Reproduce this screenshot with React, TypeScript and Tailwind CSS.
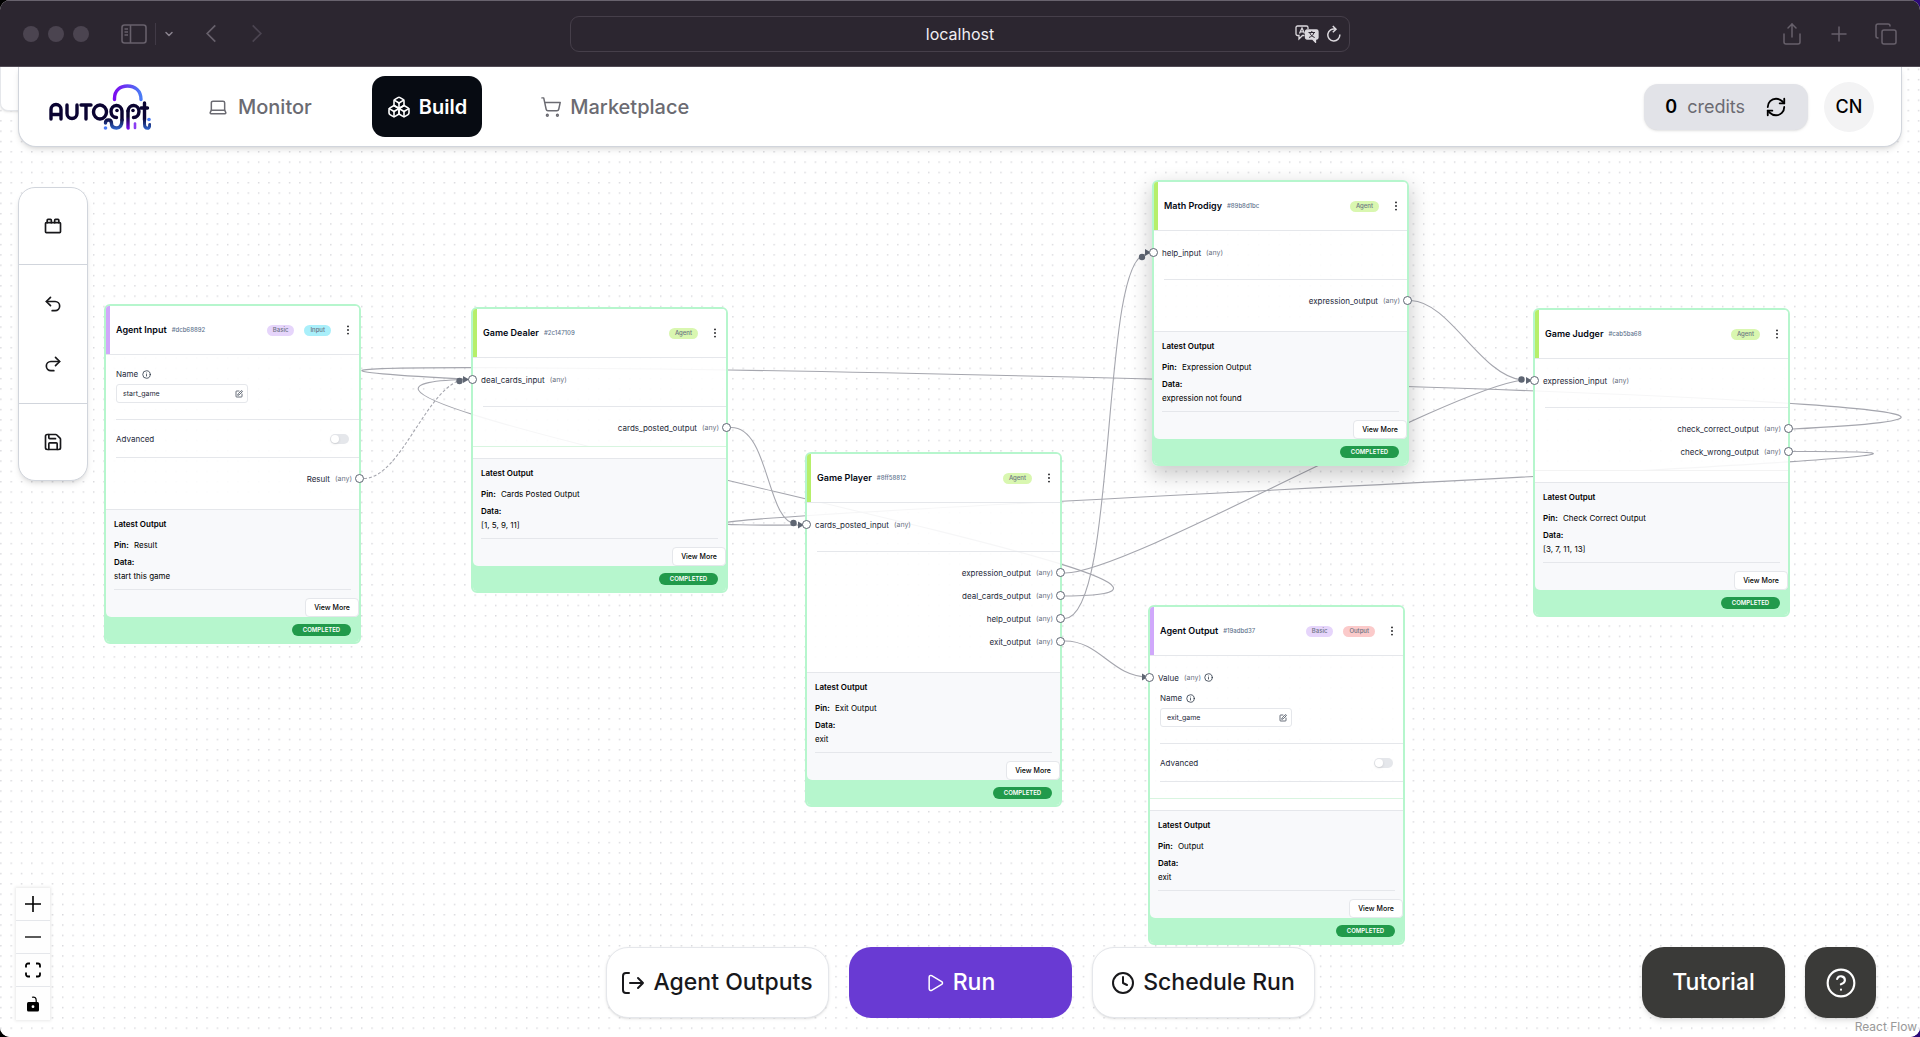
import React from 'react';
import {
  Boxes,
  ChevronDown,
  CircleHelp,
  Clock,
  Copy,
  Info,
  Laptop,
  Play,
  Plus,
  Redo2,
  RefreshCw,
  Save,
  Share,
  ShoppingCart,
  SquarePen,
  ToyBrick,
  Undo2,
} from 'lucide-react';

type Tag = 'Agent' | 'Basic' | 'Input' | 'Output';

interface FlowNode {
  id: string;
  title: string;
  tags: Tag[];
  position: string;
  accent: string;
  inputs: string[];
  outputs: string[];
  valueInput?: boolean;
  name?: string;
  pin: string;
  data: string;
  seam?: string;
  selected?: boolean;
}

const tagColors: Record<Tag, string> = {
  Agent: 'bg-[#d9f7b0]',
  Basic: 'bg-[#e6d5fb]',
  Input: 'bg-[#a9effa]',
  Output: 'bg-[#fbcaca]',
};

const nodes: FlowNode[] = [
  {
    id: 'dcb68892',
    title: 'Agent Input',
    tags: ['Basic', 'Input'],
    position: 'left-[104px] top-[237px]',
    accent: 'bg-[#d0a8fb]',
    inputs: [],
    outputs: ['Result'],
    name: 'start_game',
    pin: 'Result',
    data: 'start this game',
  },
  {
    id: '2c147109',
    title: 'Game Dealer',
    tags: ['Agent'],
    position: 'left-[471px] top-[240px]',
    accent: 'bg-[#b6ef6a]',
    inputs: ['deal_cards_input'],
    outputs: ['cards_posted_output'],
    pin: 'Cards Posted Output',
    data: '[1, 5, 9, 11]',
    seam: 'border-[#d8f5e0]',
  },
  {
    id: '8ff58812',
    title: 'Game Player',
    tags: ['Agent'],
    position: 'left-[805px] top-[385px]',
    accent: 'bg-[#b6ef6a]',
    inputs: ['cards_posted_input'],
    outputs: ['expression_output', 'deal_cards_output', 'help_output', 'exit_output'],
    pin: 'Exit Output',
    data: 'exit',
  },
  {
    id: '89b8d1bc',
    title: 'Math Prodigy',
    tags: ['Agent'],
    position: 'left-[1152px] top-[113px]',
    accent: 'bg-[#b6ef6a]',
    inputs: ['help_input'],
    outputs: ['expression_output'],
    pin: 'Expression Output',
    data: 'expression not found',
    selected: true,
  },
  {
    id: 'cab5ba68',
    title: 'Game Judger',
    tags: ['Agent'],
    position: 'left-[1533px] top-[241px]',
    accent: 'bg-[#b6ef6a]',
    inputs: ['expression_input'],
    outputs: ['check_correct_output', 'check_wrong_output'],
    pin: 'Check Correct Output',
    data: '[3, 7, 11, 13]',
    seam: 'border-[#f3f3f3]',
  },
  {
    id: '19adbd37',
    title: 'Agent Output',
    tags: ['Basic', 'Output'],
    position: 'left-[1148px] top-[538px]',
    accent: 'bg-[#d0a8fb]',
    inputs: [],
    outputs: [],
    valueInput: true,
    name: 'exit_game',
    pin: 'Output',
    data: 'exit',
    seam: 'border-[#d8f5e0]',
  },
];

// Edge paths in window coordinates, the group is shifted by the title bar height
const edges = [
  'M1792 429 C2462 396 -199 344 471 379.5',
  'M1792 451.5 C2292 449 305 529 805 525',
  'M1065 596 C1366 595 156 383 471 379.5',
  'M731 427.5 C770 427 766 524 797 524',
  'M1065 618.5 C1118 615 1100 258 1146 254',
  'M1065 573 C1130 572 1440 392 1522 380',
  'M1065 641 C1100 641 1112 677 1148 677',
  'M1411 300.5 C1450 302 1480 375 1522 380',
];
const beads = [[459.5, 381], [793.5, 523], [1142, 257], [1521.5, 379.5]];
const arrows = [[468, 379.5], [803, 525], [1150, 252.5], [1531, 380.5], [1147, 677]];

const Edges: React.FC = () => (
  <svg className="absolute inset-0 h-full w-full" aria-hidden="true">
    <defs>
      <pattern id="dots" x="5.8" y="79.4" width="10.31" height="10.31" patternUnits="userSpaceOnUse">
        <circle cx="5.5" cy="5.5" r="0.55" fill="#a3a3ab" />
      </pattern>
    </defs>
    <rect width="100%" height="100%" fill="url(#dots)" />
    <g transform="translate(0 -67)" fill="none" stroke="#a5a6ae" strokeWidth="1.1">
      {edges.map((d) => (
        <path key={d} d={d} />
      ))}
      <path d="M364 478.5 C402 478 428 382 466 379" strokeDasharray="3 2" />
      {beads.map(([x, y]) => (
        <circle key={x} cx={x} cy={y} r="3.2" fill="#5f6673" stroke="none" />
      ))}
      {arrows.map(([x, y]) => (
        <path key={x} d={`M${x - 5} ${y - 3.5} L${x + 1} ${y} L${x - 5} ${y + 3.5} Z`} fill="#5f6673" stroke="none" />
      ))}
    </g>
  </svg>
);

const Handle: React.FC<{ side: 'left' | 'right' }> = ({ side }) => (
  <span
    className={`absolute top-[7px] z-10 h-[9px] w-[9px] rounded-full border border-[#5f6673] bg-white ${
      side === 'left' ? '-left-[5px]' : '-right-[5px]'
    }`}
  />
);

const PinLabel: React.FC<{ text: string; children?: React.ReactNode }> = ({ text, children }) => (
  <>
    <span>{text}</span>
    <span className="text-[7px] text-gray-500">(any)</span>
    {children}
  </>
);

const NameField: React.FC<{ id: string; value: string }> = ({ id, value }) => (
  <div className="mr-[111px] ml-[10px]">
    <div className="flex h-[14px] items-center gap-1">
      <label htmlFor={`name-${id}`}>Name</label>
      <Info className="h-[9px] w-[9px]" />
    </div>
    <div className="mt-[3px] flex h-[19px] items-center rounded-[3px] border border-gray-200 bg-white pr-1 pl-[6px]">
      <input id={`name-${id}`} defaultValue={value} className="w-full min-w-0 text-[7px] leading-[10px] outline-none" />
      <SquarePen className="h-2 w-2 shrink-0" />
    </div>
  </div>
);

const NodeCard: React.FC<{ node: FlowNode }> = ({ node }) => (
  <article
    className={`absolute w-[257px] rounded-[6px] border-2 border-[#b6f6cd] text-[8px] leading-[10px] text-gray-800 ${node.position} ${
      node.selected ? 'shadow-[0_8px_20px_2px_rgba(0,0,0,0.2)]' : ''
    }`}
  >
    <header className="flex h-[49px] items-stretch rounded-t-[4px] border-b border-gray-200 bg-white">
      <div className={`w-1 rounded-tl-[3px] ${node.accent}`} />
      <div className="flex flex-1 items-center pr-[6px] pl-[6px]">
        <h2 className="text-[9px] font-semibold text-gray-950">{node.title}</h2>
        <span className="ml-[5px] text-[6px] font-medium text-slate-500">#{node.id}</span>
        <div className="ml-auto flex items-center gap-[10px]">
          {node.tags.map((tag) => (
            <span
              key={tag}
              className={`flex h-[11px] items-center rounded-full px-[6px] text-[6px] font-medium text-gray-500 ${tagColors[tag]}`}
            >
              {tag}
            </span>
          ))}
        </div>
        <button aria-label="Node menu" className="ml-3 flex w-[10px] justify-center">
          <svg viewBox="0 0 4 10" className="h-[10px] w-1" fill="#18181b">
            <circle cx="2" cy="1.4" r="0.9" />
            <circle cx="2" cy="5" r="0.9" />
            <circle cx="2" cy="8.6" r="0.9" />
          </svg>
        </button>
      </div>
    </header>

    <div className="bg-white/90">
      {node.inputs.map((input) => (
        <div key={input} className="pt-[10px] pb-[15px]">
          <div className="relative flex h-[23px] items-center gap-[5px] pl-2">
            <Handle side="left" />
            <PinLabel text={input} />
          </div>
        </div>
      ))}
      {node.valueInput && (
        <div className="pt-[10px]">
          <div className="relative flex h-[23px] items-center gap-[5px] pl-2">
            <Handle side="left" />
            <PinLabel text="Value">
              <Info className="-ml-0.5 h-[9px] w-[9px]" />
            </PinLabel>
          </div>
        </div>
      )}
      {node.name && (
        <>
          <div className={node.valueInput ? 'pt-0.5 pb-4' : 'pt-3 pb-4'}>
            <NameField id={node.id} value={node.name} />
          </div>
          <label className="ml-[10px] flex h-[38px] items-center justify-between border-t border-gray-200 pr-[10px]">
            Advanced
            <input type="checkbox" role="switch" className="peer sr-only" />
            <span className="flex h-[10px] w-[19px] items-center rounded-full bg-gray-200 px-px">
              <span className="h-2 w-2 rounded-full bg-white shadow-sm" />
            </span>
          </label>
        </>
      )}
      <div className="ml-[10px] border-t border-gray-200" />
      <div className="pt-[9px] pb-[7px]">
        {node.outputs.map((output) => (
          <div key={output} className="relative flex h-[23px] items-center justify-end gap-[5px] pr-[7px]">
            <PinLabel text={output} />
            <Handle side="right" />
          </div>
        ))}
      </div>
      <div className={`h-3 border-t bg-white ${node.seam ?? 'border-transparent'}`} />
    </div>

    <footer className="rounded-b-[4px] bg-[#b6f6cd]">
      <div className="rounded-b-[5px] border-t border-gray-200 bg-[#f8f9fb] text-black">
        <div className="px-2 pt-[9px]">
          <h3 className="font-semibold">Latest Output</h3>
          <p className="mt-[11px]">
            <strong className="mr-[3px] font-semibold">Pin:</strong> {node.pin}
          </p>
          <p className="mt-[7px] font-semibold">Data:</p>
          <p className="mt-1">{node.data}</p>
          <hr className="mt-2 border-gray-200" />
        </div>
        <div className="mt-2 flex justify-end">
          <button className="h-[19px] w-[54px] rounded-[4px] border border-gray-200 bg-white text-[7px] font-medium">
            View More
          </button>
        </div>
      </div>
      <div className="flex h-[25px] items-center justify-end pr-2">
        <span className="flex h-3 w-[59px] items-center justify-center rounded-full bg-[#219a4b] text-[6px] font-semibold text-white">
          COMPLETED
        </span>
      </div>
    </footer>
  </article>
);

const BrowserBar: React.FC = () => (
  <div className="grid h-[67px] shrink-0 grid-cols-[1fr_780px_1fr] items-center border-t border-b border-t-[#69636e] border-b-[#514b55] bg-[#2c2630] text-[#67606b]">
    <div className="flex items-center pl-[23px]">
      <span className="h-4 w-4 rounded-full bg-[#4b4450]" />
      <span className="ml-[9px] h-4 w-4 rounded-full bg-[#4b4450]" />
      <span className="ml-[9px] h-4 w-4 rounded-full bg-[#4b4450]" />
      <button aria-label="Sidebar" className="ml-8">
        <svg viewBox="0 0 26 20" className="h-5 w-[26px]" fill="none" stroke="currentColor" strokeWidth="1.6">
          <rect x="1" y="1" width="24" height="18" rx="2.5" />
          <path d="M9.5 1v18M3.5 5h3.5M3.5 8h3.5M3.5 11h3.5" />
        </svg>
      </button>
      <span className="ml-2 h-[22px] w-px bg-[#413a46]" />
      <button aria-label="Tab groups" className="ml-[7px]">
        <ChevronDown className="h-3 w-3 text-[#8a838e]" strokeWidth={3} />
      </button>
      <button aria-label="Back" className="ml-[30px]">
        <svg viewBox="0 0 12 20" className="h-[19px] w-3" fill="none" stroke="currentColor" strokeWidth="1.8">
          <path d="M10.5 1.5L2 10l8.5 8.5" />
        </svg>
      </button>
      <button aria-label="Forward" className="ml-[34px] text-[#4b4450]">
        <svg viewBox="0 0 12 20" className="h-[19px] w-3" fill="none" stroke="currentColor" strokeWidth="1.8">
          <path d="M1.5 1.5L10 10l-8.5 8.5" />
        </svg>
      </button>
    </div>
    <div className="grid h-9 grid-cols-[1fr_auto_1fr] items-center rounded-[9px] border border-[#463f4a] px-2">
      <span />
      <span className="text-base text-[#f1eff3]">localhost</span>
      <div className="flex items-center justify-end gap-2 text-[#dcd9de]">
        <button aria-label="Translate">
          <svg viewBox="0 0 24 18" className="h-[18px] w-6" fill="none" stroke="currentColor" strokeWidth="1.3">
            <path d="M9.5 10.5H7.5L4 14v-3.5H2.5A1.5 1.5 0 0 1 1 9V2.5A1.5 1.5 0 0 1 2.5 1h9A1.5 1.5 0 0 1 13 2.5V4" />
            <path d="M4.5 8.5L7 3l2.5 5.5M5.3 6.8h3.4" />
            <path d="M12 5h9.5A1.5 1.5 0 0 1 23 6.5v6a1.5 1.5 0 0 1-1.5 1.5H20.5v3.2L17.5 14H12a1.5 1.5 0 0 1-1.5-1.5v-6A1.5 1.5 0 0 1 12 5z" fill="currentColor" />
            <path d="M13.5 7.5h6.5M16.8 6v1.5M19 7.5c-.6 2.4-2.5 4-5 5M14.7 7.5c.6 2.4 2.5 4 5 5" stroke="#2c2630" strokeWidth="1" />
          </svg>
        </button>
        <button aria-label="Reload">
          <svg viewBox="0 0 14 17" className="h-[17px] w-[14px]" fill="none" stroke="currentColor" strokeWidth="1.5">
            <path d="M12.8 9.5A6 6 0 1 1 8.5 4.2M5.8 1l3.2 3.2-3.2 3" />
          </svg>
        </button>
      </div>
    </div>
    <div className="flex items-center justify-end gap-[23px] pr-[22px]">
      <button aria-label="Share">
        <Share className="h-6 w-6" strokeWidth={1.5} />
      </button>
      <button aria-label="New tab">
        <Plus className="h-6 w-6" strokeWidth={1.5} />
      </button>
      <button aria-label="Tab overview">
        <Copy className="h-6 w-6" strokeWidth={1.5} />
      </button>
    </div>
  </div>
);

const Logo: React.FC = () => (
  <svg viewBox="0 0 102 46" className="h-[46px] w-[102px]" fill="none" strokeWidth="3.4" strokeLinecap="round" strokeLinejoin="round">
    <defs>
      <linearGradient id="arc" x1="0" x2="1">
        <stop offset="0" stopColor="#7c0cf0" />
        <stop offset="1" stopColor="#4a7bf5" />
      </linearGradient>
      <linearGradient id="stem" x1="0" y1="20" x2="0" y2="45" gradientUnits="userSpaceOnUse">
        <stop offset="0.5" stopColor="#0b0432" />
        <stop offset="1" stopColor="#7c0cf0" />
      </linearGradient>
      <linearGradient id="tail" x1="0" y1="34" x2="0" y2="45" gradientUnits="userSpaceOnUse">
        <stop offset="0" stopColor="#0b0432" />
        <stop offset="1" stopColor="#2f62c8" />
      </linearGradient>
    </defs>
    <path d="M65.5 15.5V14.5C65.5 6.5 71 2 78.5 2S92 6.5 92 15.5" stroke="url(#arc)" />
    <g stroke="#0b0432">
      <path d="M2 35V25.5a5 5 0 0 1 10 0V35M2 30.5h10" />
      <path d="M18 21v8.5a5 5 0 0 0 10 0v-8.5" />
      <path d="M32 21h10M37 21v14" />
      <ellipse cx="51" cy="28" rx="6.5" ry="7" />
      <path d="M73 36V27a5.5 6 0 1 0-5.5 6.5" />
      <path d="M79 27a5.5 6 0 1 1 5.5 6.5" />
      <path d="M95.5 19v17M92 24h6.5" />
    </g>
    <circle cx="68" cy="26.5" r="1.8" fill="#0b0432" />
    <circle cx="84" cy="26.5" r="1.8" fill="#0b0432" />
    <path d="M73 36c0 5-1.5 8-5.5 8s-5-2-5-4.5-1.2-3.5-3-3.5-3 1-3 3" stroke="url(#tail)" />
    <path d="M79 27v16.500l.1.5" stroke="url(#stem)" />
    <path d="M86 39.5v4.5" stroke="#8a3cf2" strokeWidth="2.6" />
    <path d="M95.5 36v4c0 3 1.2 4.3 3 4.3s2.2-1.3 2.2-3.8" stroke="url(#tail)" strokeWidth="3" />
    <circle cx="100" cy="35.5" r="1.8" fill="#4a7bf5" />
    <circle cx="56.500" cy="44" r="1.8" fill="#4a7bf5" />
  </svg>
);

const NavBar: React.FC = () => (
  <nav className="relative mx-[18px] flex h-[80px] items-center rounded-b-[18px] border border-t-0 border-gray-300 bg-white pr-[27px] pl-[30px] text-xl font-medium text-[#6b6b72] shadow-md">
    <a href="#home" aria-label="AutoGPT">
      <Logo />
    </a>
    <a href="#monitor" className="ml-[57px] flex items-center gap-2.5">
      <Laptop className="h-5 w-5" strokeWidth={1.8} />
      Monitor
    </a>
    <a
      href="#build"
      className="ml-[60px] flex h-[61px] items-center gap-2 rounded-[13px] bg-[#070b12] px-[15px] font-semibold text-white"
    >
      <Boxes className="h-6 w-6" strokeWidth={1.6} />
      Build
    </a>
    <a href="#marketplace" className="ml-[58px] flex items-center gap-2">
      <ShoppingCart className="h-[22px] w-[22px]" strokeWidth={1.6} />
      Marketplace
    </a>
    <div className="ml-auto flex h-[46px] items-center rounded-[14px] bg-[#e2e3e8] px-[21px] text-lg shadow-sm">
      <span className="font-semibold text-black">0</span>
      <span className="ml-2.5 font-normal">credits</span>
      <button aria-label="Refresh credits" className="ml-5 text-black">
        <RefreshCw className="h-[22px] w-[22px]" strokeWidth={2} />
      </button>
    </div>
    <button className="ml-4 h-[50px] w-[50px] rounded-full bg-[#f3f3f4] text-lg text-black">CN</button>
  </nav>
);

const Toolbar: React.FC = () => (
  <div className="absolute top-[120px] left-[18px] flex w-[70px] flex-col rounded-[17px] border border-gray-300 bg-white text-zinc-900 shadow-md">
    <button aria-label="Blocks" className="flex h-[77px] items-center justify-center border-b border-gray-300">
      <ToyBrick className="h-5 w-5" />
    </button>
    <button aria-label="Undo" className="flex h-[77px] items-center justify-center">
      <Undo2 className="h-5 w-5" />
    </button>
    <button aria-label="Redo" className="flex h-[61px] items-start justify-center pt-3">
      <Redo2 className="h-5 w-5" />
    </button>
    <button aria-label="Save" className="flex h-[77px] items-center justify-center border-t border-gray-300">
      <Save className="h-5 w-5" />
    </button>
  </div>
);

const ZoomControls: React.FC = () => (
  <div className="absolute bottom-[17px] left-4 flex w-[34px] flex-col divide-y divide-gray-200 bg-[#fefefe] text-black shadow-[0_0_3px_1px_rgba(0,0,0,0.09)]">
    <button aria-label="Zoom in" className="flex h-[33px] items-center justify-center">
      <svg viewBox="0 0 16 16" className="h-4 w-4" stroke="currentColor" strokeWidth="1.6">
        <path d="M0 8h16M8 0v16" />
      </svg>
    </button>
    <button aria-label="Zoom out" className="flex h-[33px] items-center justify-center">
      <svg viewBox="0 0 16 16" className="h-4 w-4" stroke="currentColor" strokeWidth="1.3">
        <path d="M0 8h16" />
      </svg>
    </button>
    <button aria-label="Fit view" className="flex h-[33px] items-center justify-center">
      <svg viewBox="0 0 16 16" className="h-4 w-4" fill="none" stroke="currentColor" strokeWidth="1.8">
        <path d="M1 5.5V3.5A2 2 0 0 1 3 1.5h2M11 1.5h2a2 2 0 0 1 2 2v2M15 10.5v2a2 2 0 0 1-2 2h-2M5 14.5H3a2 2 0 0 1-2-2v-2" />
      </svg>
    </button>
    <button aria-label="Lock" className="flex h-[33px] items-center justify-center">
      <svg viewBox="0 0 16 16" className="h-4 w-4" fill="none" stroke="currentColor" strokeWidth="1.2">
        <rect x="2" y="6" width="12" height="9.5" rx="1.5" fill="currentColor" stroke="none" />
        <path d="M7 1.3c2.5-.8 4.2.4 4.2 3V6" />
        <circle cx="8" cy="10.7" r="1.4" fill="#fff" stroke="none" />
      </svg>
    </button>
  </div>
);

const App: React.FC = () => {
  return (
    <div className="h-screen bg-linear-to-r from-black to-[#2d0a78] font-['Inter',sans-serif]">
      <div className="flex h-full flex-col overflow-hidden rounded-[10px] bg-white">
        <BrowserBar />
        <main className="relative flex-1 overflow-hidden bg-white">
          <Edges />
          {nodes.map((node) => (
            <NodeCard key={node.id} node={node} />
          ))}

          <div className="absolute top-0 left-0 h-11 w-10 rounded-bl-[8px] border-b border-l border-gray-200 bg-white shadow-sm" />
          <NavBar />
          <Toolbar />
          <ZoomControls />

          {/* Run controls */}
          <div className="absolute inset-x-0 bottom-[19px] flex justify-center gap-5 text-[23px] font-medium text-zinc-900">
            <button className="flex h-[71px] w-[223px] items-center justify-center gap-2 rounded-[22px] border border-gray-200 bg-white shadow-sm">
              <svg viewBox="0 0 24 24" className="h-6 w-6" fill="none" stroke="currentColor" strokeWidth="2" strokeLinecap="round" strokeLinejoin="round">
                <path d="M8 2H5a3 3 0 0 0-3 3v14a3 3 0 0 0 3 3h3M9 12h13M17 7l5 5-5 5" />
              </svg>
              Agent Outputs
            </button>
            <button className="flex h-[71px] w-[223px] items-center justify-center gap-2 rounded-[22px] bg-[#693ad3] text-white">
              <Play className="h-5 w-5" strokeWidth={1.8} />
              Run
            </button>
            <button className="flex h-[71px] w-[223px] items-center justify-center gap-2 rounded-[22px] border border-gray-200 bg-white shadow-sm">
              <Clock className="h-6 w-6" />
              Schedule Run
            </button>
          </div>

          <div className="absolute right-[44px] bottom-[19px] flex gap-5 text-[23px] font-medium text-white">
            <button className="h-[71px] w-[143px] rounded-[22px] bg-[#3a3a38] shadow-md">Tutorial</button>
            <button aria-label="Help" className="flex h-[71px] w-[71px] items-center justify-center rounded-[22px] bg-[#3a3a38] shadow-md">
              <CircleHelp className="h-8 w-8" strokeWidth={1.6} />
            </button>
          </div>
          <a href="#react-flow" className="absolute right-[3px] bottom-0 text-xs leading-5 text-[#999]">
            React Flow
          </a>
        </main>
      </div>
    </div>
  );
};

export default App;
